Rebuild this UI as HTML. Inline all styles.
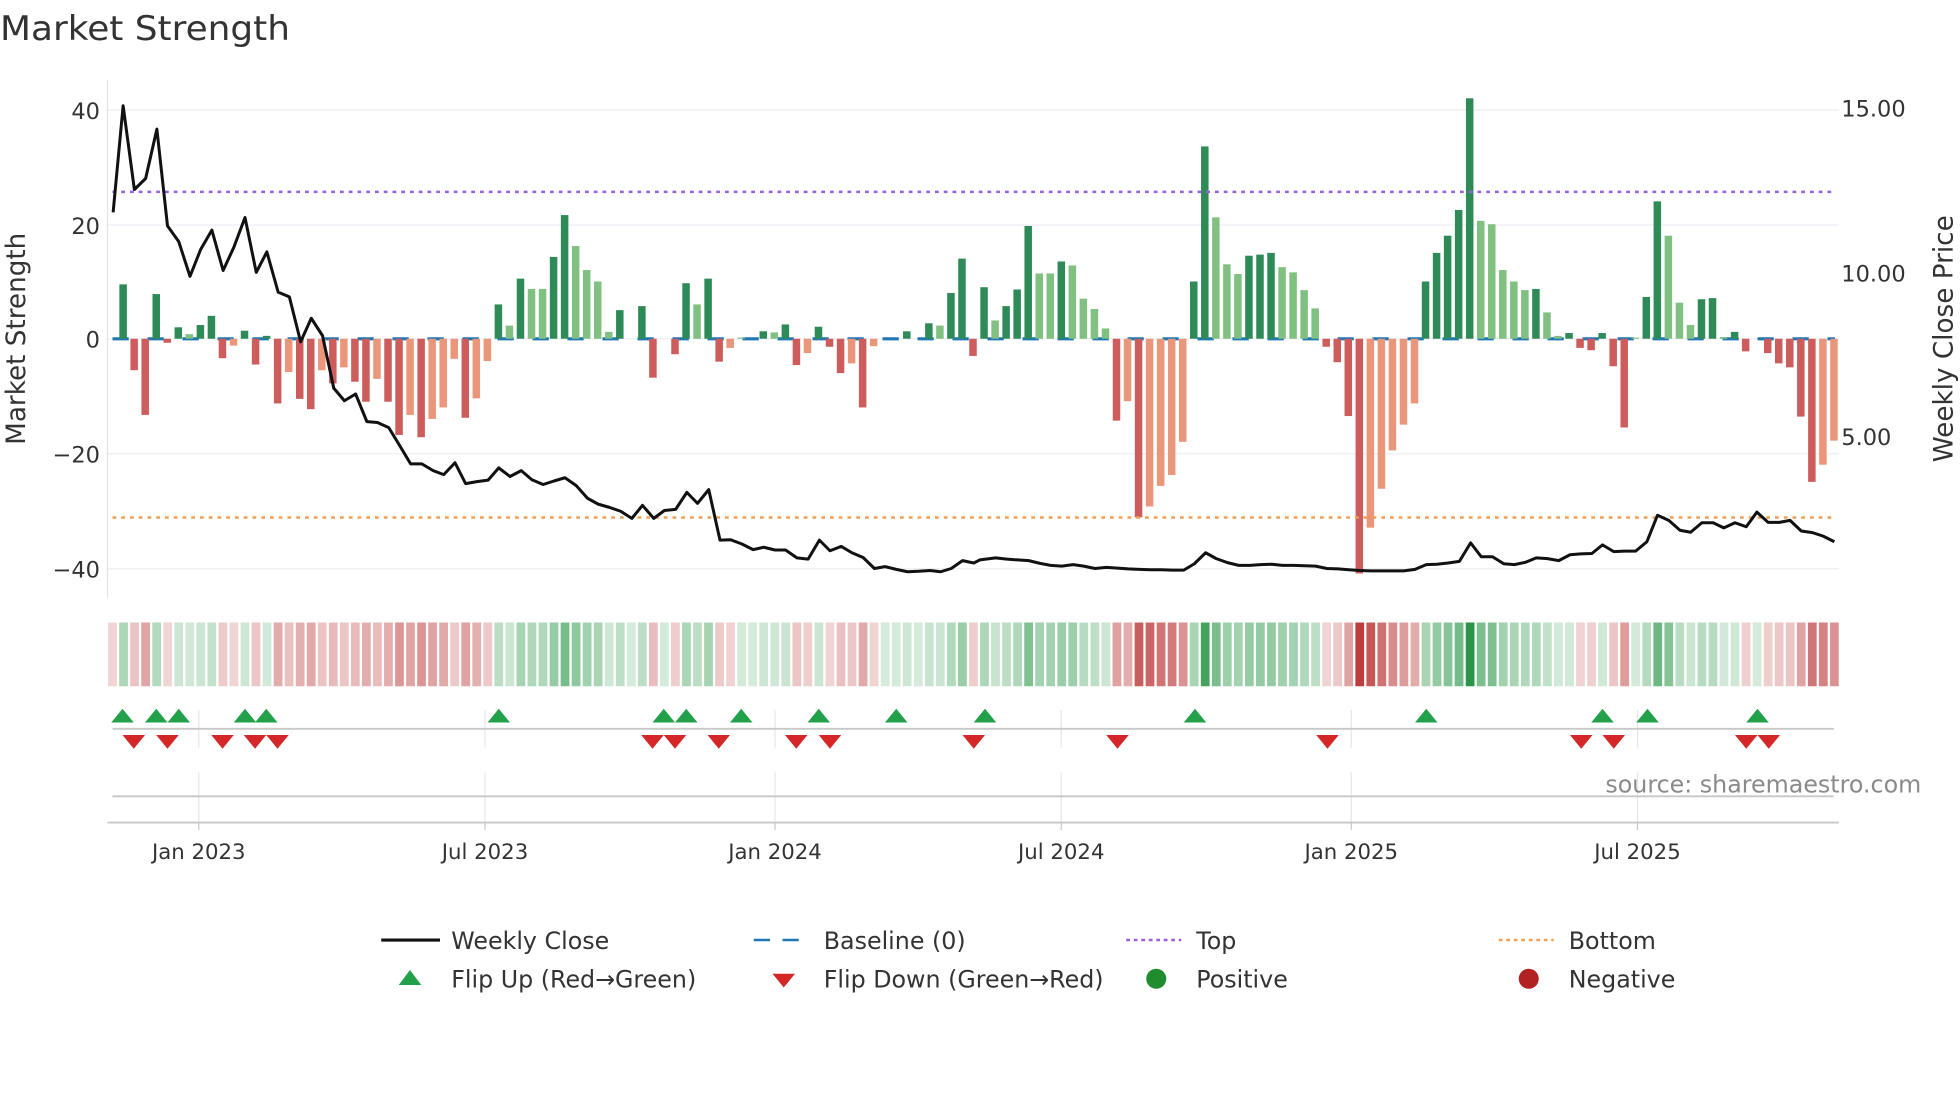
<!DOCTYPE html>
<html><head><meta charset="utf-8"><style>
html,body{margin:0;padding:0;background:#fff;width:1960px;height:1102px;overflow:hidden}
svg{display:block}
text{font-family:"DejaVu Sans","Liberation Sans",sans-serif;fill:#333}
</style></head><body>
<svg id="s" width="1960" height="1102" viewBox="0 0 1568 881.6" preserveAspectRatio="none" xmlns="http://www.w3.org/2000/svg">
<rect width="1568" height="882" fill="#fff"/>
<text x="0" y="32" font-size="27" textLength="232" lengthAdjust="spacingAndGlyphs">Market Strength</text>
<g stroke="#eceef2" stroke-width="1">
<line x1="86" x2="1471" y1="88" y2="88"/><line x1="86" x2="1471" y1="180" y2="180"/>
<line x1="86" x2="1471" y1="271" y2="271"/><line x1="86" x2="1471" y1="363" y2="363"/>
<line x1="86" x2="1471" y1="455" y2="455"/>
</g>
<line x1="86" x2="86" y1="64" y2="478" stroke="#e2e2e2"/>
<g font-size="18" text-anchor="end">
<text x="80" y="95">40</text><text x="80" y="187">20</text><text x="80" y="278">0</text>
<text x="80" y="370">−20</text><text x="80" y="462">−40</text>
</g>
<g font-size="18">
<text x="1473" y="93">15.00</text><text x="1473" y="225">10.00</text><text x="1473" y="356">5.00</text>
</g>
<text transform="translate(20,271) rotate(-90)" font-size="21" text-anchor="middle">Market Strength</text>
<text transform="translate(1562,271) rotate(-90)" font-size="21" text-anchor="middle">Weekly Close Price</text>
<line x1="90" x2="1468" y1="271" y2="271" stroke="#1f77b4" stroke-width="2.5" stroke-dasharray="13 15"/>
<g id="bars"></g>
<line x1="90" x2="1468" y1="153.5" y2="153.5" stroke="#9b5fe0" stroke-width="2" stroke-dasharray="3 4"/>
<line x1="90" x2="1468" y1="414" y2="414" stroke="#f0a050" stroke-width="2" stroke-dasharray="3 4"/>
<polyline id="price" fill="none" stroke="#111" stroke-width="2.4" stroke-linejoin="round"/>
<g id="strip"></g>
<g stroke="#e6e6e6"><line x1="159" x2="159" y1="568" y2="598"/><line x1="388" x2="388" y1="568" y2="598"/><line x1="620" x2="620" y1="568" y2="598"/><line x1="849" x2="849" y1="568" y2="598"/><line x1="1081" x2="1081" y1="568" y2="598"/><line x1="1310" x2="1310" y1="568" y2="598"/>
<line x1="159" x2="159" y1="618" y2="658"/><line x1="388" x2="388" y1="618" y2="658"/><line x1="620" x2="620" y1="618" y2="658"/><line x1="849" x2="849" y1="618" y2="658"/><line x1="1081" x2="1081" y1="618" y2="658"/><line x1="1310" x2="1310" y1="618" y2="658"/></g>
<line x1="90" x2="1467" y1="583" y2="583" stroke="#c8c8c8" stroke-width="1.5"/>
<g id="flips"></g>
<line x1="90" x2="1467" y1="637" y2="637" stroke="#c8c8c8" stroke-width="1.5"/>
<line x1="86" x2="1471" y1="658" y2="658" stroke="#c8c8c8" stroke-width="1.5"/>
<g stroke="#c8c8c8"><line x1="159" x2="159" y1="658" y2="664"/><line x1="388" x2="388" y1="658" y2="664"/><line x1="620" x2="620" y1="658" y2="664"/><line x1="849" x2="849" y1="658" y2="664"/><line x1="1081" x2="1081" y1="658" y2="664"/><line x1="1310" x2="1310" y1="658" y2="664"/></g>
<g font-size="17" text-anchor="middle">
<text x="159" y="687">Jan 2023</text><text x="388" y="687">Jul 2023</text><text x="620" y="687">Jan 2024</text>
<text x="849" y="687">Jul 2024</text><text x="1081" y="687">Jan 2025</text><text x="1310" y="687">Jul 2025</text>
</g>
<text x="1537" y="634" font-size="19" text-anchor="end" style="fill:#8a8a8a">source: sharemaestro.com</text>
<g font-size="19">
<line x1="305" x2="352" y1="752" y2="752" stroke="#111" stroke-width="2.5"/><text x="361" y="759">Weekly Close</text>
<line x1="603" x2="647" y1="752" y2="752" stroke="#1f77b4" stroke-width="2" stroke-dasharray="13 10"/><text x="659" y="759">Baseline (0)</text>
<line x1="901" x2="945" y1="752" y2="752" stroke="#9b5fe0" stroke-width="2" stroke-dasharray="3 3"/><text x="957" y="759">Top</text>
<line x1="1199" x2="1243" y1="752" y2="752" stroke="#f0a050" stroke-width="2" stroke-dasharray="3 3"/><text x="1255" y="759">Bottom</text>
<polygon points="319,788 337,788 328,776" fill="#22a04a"/><text x="361" y="790">Flip Up (Red→Green)</text>
<polygon points="618,779 636,779 627,790" fill="#d62728"/><text x="659" y="790">Flip Down (Green→Red)</text>
<circle cx="925" cy="783" r="8" fill="#1f8c2e"/><text x="957" y="790">Positive</text>
<circle cx="1223" cy="783" r="8" fill="#b22222"/><text x="1255" y="790">Negative</text>
</g>
</svg>
<script>
var NS="http://www.w3.org/2000/svg";
function el(t,a,p){var e=document.createElementNS(NS,t);for(var k in a)e.setAttribute(k,a[k]);document.getElementById(p).appendChild(e);return e;}
var V="9.5G,-5.5R,-13.3R,7.8G,-0.7R,2G,0.8L,2.4G,4G,-3.4R,-1.2S,1.4G,-4.5R,0.5G,-11.3R,-5.8S,-10.5R,-12.3R,-5.5S,-7.8R,-5S,-7.5R,-11R,-7S,-11R,-16.8R,-13.3S,-17.2R,-14S,-12S,-3.5S,-13.8R,-10.4S,-3.9S,6G,2.3L,10.5G,8.7L,8.7L,14.3G,21.6G,16.2L,12L,10L,1.2L,5G,0G,5.7G,-6.8R,0R,-2.7R,9.7G,6L,10.5G,-4R,-1.6S,0.2L,0G,1.3G,1.1L,2.5G,-4.6R,-2.5S,2.1G,-1.4R,-6R,-4.3S,-12R,-1.3S,0R,0R,1.3G,0G,2.7G,2.3L,8G,14G,-3R,9G,3.2L,5.7G,8.6G,19.7G,11.4L,11.4L,13.5G,12.8L,7L,5.2L,1.8L,-14.3R,-10.9S,-31.2R,-29.3S,-25.7S,-23.8S,-18S,10G,33.6G,21.2L,13L,11.3L,14.5G,14.7G,15G,12.5L,11.6L,8.5L,5.3L,-1.4R,-4.1R,-13.5R,-41R,-33S,-26.2S,-19.5S,-15S,-11.3S,10G,15G,18G,22.5G,42G,20.6L,20L,12L,10L,8.5L,8.7G,4.6L,0.5L,1G,-1.6R,-2R,1G,-4.8R,-15.5R,0.2L,7.3G,24G,18L,6.3L,2.4L,6.9G,7.1G,0.3L,1.2G,-2.2R,0R,-2.5R,-4.3R,-5R,-13.6R,-25R,-22S,-17.8S".split(",");
var C={G:"#2e8b57",L:"#80c080",R:"#cd5c5c",S:"#e9967a"};
function stripCol(v){var a=0.2+0.8*Math.min(1,Math.abs(v)/40);return v>=0?"rgba(40,150,70,"+a+")":"rgba(190,60,60,"+a+")";}
el("rect",{x:86.5,y:498,width:7,height:51,fill:stripCol(-1)},"strip");
V.forEach(function(s,i){var v=parseFloat(s),c=s.slice(-1),x=98.5+i*8.83;
 var h=Math.abs(v)*4.58;
 if(h>0.3) el("rect",{x:x-3,y:v>0?271-h:271,width:6,height:h,fill:C[c]},"bars");
 el("rect",{x:86.5+(i+1)*8.83,y:498,width:7,height:51,fill:stripCol(v)},"strip");
});
var P1=[[181,538],[197,268],[215,480],[233,452],[251,327],[268,572],[286,612],[304,700],[321,632],[339,583],[357,685],[374,627],[392,551],[410,690],[427,638],[445,740],[463,752],[481,866],[498,806],[516,850],[534,983],[551,1015],[569,998],[587,1068],[604,1070],[622,1083],[640,1130],[657,1175],[675,1175],[693,1192],[710,1202],[728,1172],[745,1225],[763,1220],[781,1216],[798,1185],[816,1207],[834,1192],[851,1215],[869,1227],[887,1218],[904,1210],[922,1230],[940,1262],[957,1277],[975,1285],[993,1295],[1011,1313],[1028,1280],[1046,1313],[1063,1293],[1081,1290],[1099,1247],[1116,1275],[1134,1240],[1152,1368],[1169,1367],[1187,1378],[1205,1392],[1222,1386],[1240,1393],[1257,1393],[1275,1413],[1293,1416],[1311,1368],[1328,1395],[1346,1384],[1363,1400],[1381,1412],[1399,1440],[1416,1435],[1434,1442],[1452,1448],[1470,1447],[1488,1445],[1505,1448],[1522,1440],[1540,1420],[1558,1426]];
var P2=[[0,1418],[25,1413],[43,1416],[60,1418],[78,1420],[96,1427],[113,1432],[131,1434],[149,1430],[166,1434],[184,1440],[202,1437],[220,1439],[237,1441],[255,1442],[273,1443],[290,1443],[308,1444],[326,1444],[343,1428],[361,1400],[378,1415],[396,1425],[414,1432],[432,1432],[449,1430],[467,1429],[484,1432],[502,1432],[519,1433],[537,1434],[555,1440],[573,1441],[590,1443],[608,1445],[625,1446],[643,1446],[661,1446],[678,1446],[696,1442],[714,1430],[731,1429],[749,1426],[767,1422],[785,1375],[802,1410],[820,1410],[838,1428],[855,1430],[873,1424],[890,1413],[908,1415],[926,1420],[944,1405],[961,1403],[979,1402],[996,1380],[1014,1397],[1031,1396],[1049,1396],[1067,1372],[1084,1305],[1102,1318],[1120,1343],[1137,1348],[1155,1324],[1173,1324],[1190,1337],[1208,1324],[1226,1334],[1243,1297],[1261,1323],[1279,1323],[1296,1318],[1314,1345],[1332,1349],[1349,1358],[1367,1372]];
var pts=[];P1.forEach(function(p){pts.push((p[0]/2).toFixed(1)+","+(p[1]/3.166).toFixed(1));});
P2.forEach(function(p){pts.push((784+p[0]/2).toFixed(1)+","+(p[1]/3.166).toFixed(1));});
document.getElementById("price").setAttribute("points",pts.join(" "));
[98,125,143,196,213,399,531,549,593,655,717,788,956,1141,1282,1318,1406].forEach(function(x){el("polygon",{points:(x-9)+",578 "+(x+9)+",578 "+x+",567",fill:"#22a04a"},"flips");});
[107,134,178,204,222,522,540,575,637,664,779,894,1062,1265,1291,1397,1415].forEach(function(x){el("polygon",{points:(x-9)+",588 "+(x+9)+",588 "+x+",599",fill:"#d62728"},"flips");});
</script>
</body></html>
